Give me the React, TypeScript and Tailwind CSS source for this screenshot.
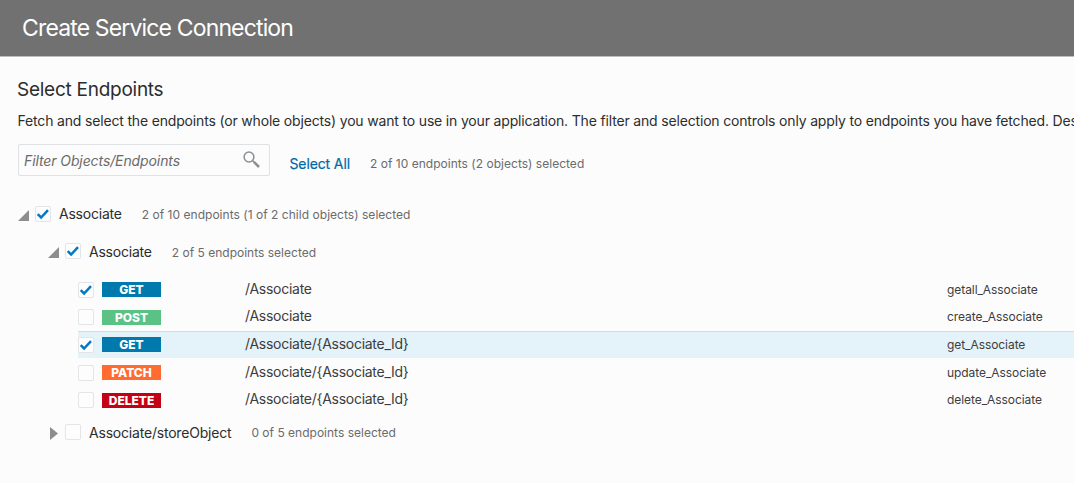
import React from "react";

type Endpoint = {
  method: string;
  path: string;
  id: string;
  checked: boolean;
  color: string;
  rowClass: string;
  badgeClass: string;
};

const endpoints: Endpoint[] = [
  { method: "GET", path: "/Associate", id: "getall_Associate", checked: true, color: "bg-[#0079ad]", rowClass: "h-[27px]", badgeClass: "mt-[6px]" },
  { method: "POST", path: "/Associate", id: "create_Associate", checked: false, color: "bg-[#5bc286]", rowClass: "h-[28px]", badgeClass: "mt-[7px]" },
  { method: "GET", path: "/Associate/{Associate_Id}", id: "get_Associate", checked: true, color: "bg-[#0079ad]", rowClass: "mb-px h-[27px] bg-[#e4f2fa] shadow-[inset_0_1px_0_#d6dcdf]", badgeClass: "mt-[6px]" },
  { method: "PATCH", path: "/Associate/{Associate_Id}", id: "update_Associate", checked: false, color: "bg-[#ff6b30]", rowClass: "h-[27px]", badgeClass: "mt-[6px]" },
  { method: "DELETE", path: "/Associate/{Associate_Id}", id: "delete_Associate", checked: false, color: "bg-[#c40016]", rowClass: "h-[28px]", badgeClass: "mt-[7px]" },
];

function Checkbox({ checked }: { checked: boolean }) {
  return (
    <span
      role="checkbox"
      aria-checked={checked}
      className="flex size-4 shrink-0 items-center justify-center rounded-[2px] border border-[#e3e5e6] bg-[#fdfdfd]"
    >
      {checked && (
        <svg viewBox="0 0 14 14" className="size-[14px]" fill="none">
          <path d="M1.7 7.1 L5.1 10.5 L12 3.1" stroke="#0279c2" strokeWidth="2.5" />
        </svg>
      )}
    </span>
  );
}

function OpenArrow() {
  return (
    <svg viewBox="0 0 11 11" className="mt-[3px] size-[11px] shrink-0">
      <path d="M11 0 V11 H0 Z" fill="#8b8d8f" />
    </svg>
  );
}

function ClosedArrow() {
  return (
    <svg viewBox="0 0 8 13" className="mt-[2px] h-[13px] w-2 shrink-0">
      <path d="M0 0 L8 6.5 L0 13 Z" fill="#8b8d8f" />
    </svg>
  );
}

export default function App() {
  return (
    <div className="h-[483px] w-full overflow-hidden bg-[#fcfcfc] font-['Inter',sans-serif] text-[#2d2d2d]">
      <header className="flex h-[57px] items-center border-b border-[#bdbdbd] bg-[#717171] pl-[22px]">
        <h1 className="text-[23px] leading-7 tracking-[-0.85px] whitespace-nowrap text-white">Create Service Connection</h1>
      </header>
      <main className="pl-[18px]">
        <h2 className="-ml-px pt-[21px] text-[19px] leading-6 tracking-[-0.26px]">Select Endpoints</h2>
        <p className="-ml-[0.5px] mt-[9px] text-[14px] leading-5 tracking-[-0.17px] whitespace-nowrap">
          Fetch and select the endpoints (or whole objects) you want to use in your application. The filter and selection controls only apply to endpoints you have fetched. Des
        </p>
        <div className="mt-[13px] flex h-8 items-center">
          <div className="flex h-8 w-[252px] items-center justify-between rounded-[2px] border border-[#dfe2e4] pr-[9px] pl-[5px]">
            <span className="text-[14px] tracking-[-0.1px] text-[#6a6a6a] italic">Filter Objects/Endpoints</span>
            <svg viewBox="0 0 17 17" className="-mt-px size-[17px]" fill="none" stroke="#8d9092">
              <circle cx="6" cy="6" r="4.9" strokeWidth="1.5" />
              <path d="M9.6 9.6 L11 11" strokeWidth="1.4" />
              <path d="M10.8 10.8 L16 16" strokeWidth="2.6" />
            </svg>
          </div>
          <button className="mt-[6px] ml-[19.5px] text-[14px] tracking-[-0.12px] text-[#0068a5] [-webkit-text-stroke:0.2px_#0068a5]">Select All</button>
          <span className="mt-[7px] ml-5 text-[12px] tracking-[0.02px] text-[#6b6b6b]">2 of 10 endpoints (2 objects) selected</span>
        </div>
        <div className="mt-[28px] flex h-5 items-center">
          <OpenArrow />
          <div className="ml-[6px]"><Checkbox checked /></div>
          <span className="-mt-px ml-2 text-[14px] tracking-[-0.22px]">Associate</span>
          <span className="mt-px ml-5 text-[12px] tracking-[0.03px] text-[#6b6b6b]">2 of 10 endpoints (1 of 2 child objects) selected</span>
        </div>
        <div className="mt-[17px] flex h-5 items-center pl-[30px]">
          <OpenArrow />
          <div className="ml-[6px]"><Checkbox checked /></div>
          <span className="mt-px ml-2 text-[14px] tracking-[-0.22px]">Associate</span>
          <span className="mt-[3px] ml-5 text-[12px] tracking-[0.01px] text-[#6b6b6b]">2 of 5 endpoints selected</span>
        </div>
        <div className="mt-[15px] pl-[60px]">
          {endpoints.map((e) => (
            <div key={e.id} className={`flex items-start text-[#3d3d3d] ${e.rowClass}`}>
              <div className="pt-[6px]"><Checkbox checked={e.checked} /></div>
              <div className={`ml-2 flex h-[15px] w-[59px] items-center justify-center text-[12px] leading-[15px] font-extrabold tracking-[-0.02px] text-white ${e.color} ${e.badgeClass}`}>
                {e.method}
              </div>
              <span className="ml-[84px] w-[702px] shrink-0 pt-[3px] text-[14px] leading-5 tracking-[-0.27px]">{e.path}</span>
              <span className="pt-[4px] text-[12px] leading-5 tracking-[-0.07px]">{e.id}</span>
            </div>
          ))}
        </div>
        <div className="mt-[8px] flex h-5 items-center pl-[32px]">
          <ClosedArrow />
          <div className="ml-[7px]"><Checkbox checked={false} /></div>
          <span className="ml-2 text-[14px] tracking-[-0.2px]">Associate/storeObject</span>
          <span className="mt-px ml-5 text-[12px] tracking-[0.01px] text-[#6b6b6b]">0 of 5 endpoints selected</span>
        </div>
      </main>
    </div>
  );
}
